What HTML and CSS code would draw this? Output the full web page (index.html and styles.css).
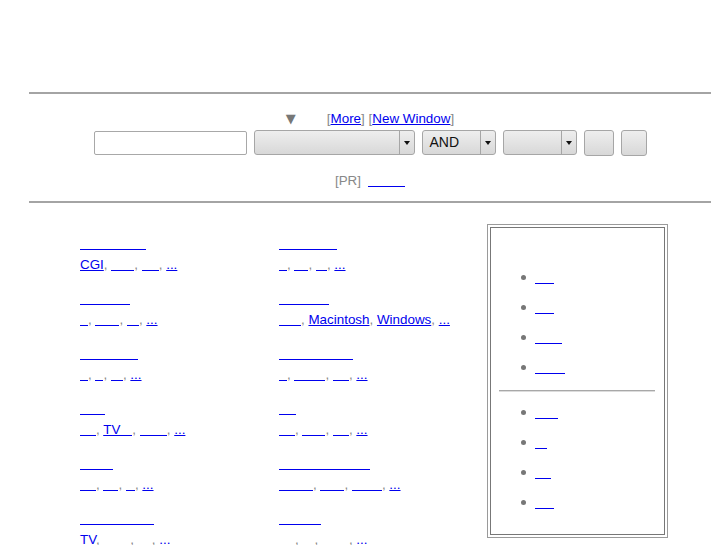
FILE: index.html
```html
<!DOCTYPE html>
<html lang="ja">
<head>
<meta charset="utf-8">
<title>Directory</title>
<link rel="stylesheet" href="styles.css">
</head>
<body>
<div class="page">
  <div class="masthead"></div>
  <div class="rule"></div>

  <div class="search">
    <div class="opts"><span class="tri">▼</span><span class="spacer"></span><span class="br">[</span><a href="#">More</a><span class="br">]</span> <span class="br">[</span><a href="#">New Window</a><span class="br">]</span></div>
    <div class="controls">
      <input class="field" type="text">
      <div class="sel s-wide"><span class="val"></span><span class="arrow"></span></div>
      <div class="sel s-mid"><span class="val">AND</span><span class="arrow"></span></div>
      <div class="sel s-mid"><span class="val"></span><span class="arrow"></span></div>
      <button class="btn b-a" type="button"></button>
      <button class="btn b-b" type="button"></button>
    </div>
    <div class="pr"><span class="br">[PR]</span><a href="#" class="b w37"></a></div>
  </div>

  <div class="rule"></div>

  <div class="dir">
    <div class="col">
      <div class="cat">
        <div class="hd"><a href="#" class="b w66"></a></div>
        <div class="sub"><a href="#">CGI</a>, <a href="#" class="b w23"></a>, <a href="#" class="b w17"></a>, <a href="#">...</a></div>
      </div>
      <div class="cat">
        <div class="hd"><a href="#" class="b w50"></a></div>
        <div class="sub"><a href="#" class="b w8"></a>, <a href="#" class="b w24"></a>, <a href="#" class="b w12"></a>, <a href="#">...</a></div>
      </div>
      <div class="cat">
        <div class="hd"><a href="#" class="b w58"></a></div>
        <div class="sub"><a href="#" class="b w8"></a>, <a href="#" class="b w8"></a>, <a href="#" class="b w12"></a>, <a href="#">...</a></div>
      </div>
      <div class="cat">
        <div class="hd"><a href="#" class="b w25"></a></div>
        <div class="sub"><a href="#" class="b w16"></a>, <a href="#">TV<span class="b w12"></span></a>, <a href="#" class="b w27"></a>, <a href="#">...</a></div>
      </div>
      <div class="cat">
        <div class="hd"><a href="#" class="b w33"></a></div>
        <div class="sub"><a href="#" class="b w16"></a>, <a href="#" class="b w15"></a>, <a href="#" class="b w9"></a>, <a href="#">...</a></div>
      </div>
      <div class="cat">
        <div class="hd"><a href="#" class="b w74"></a></div>
        <div class="sub"><a href="#">TV</a>, <a href="#" class="b w27"></a>, <a href="#" class="b w14"></a>, <a href="#">...</a></div>
      </div>
    </div>

    <div class="col">
      <div class="cat">
        <div class="hd"><a href="#" class="b w58"></a></div>
        <div class="sub"><a href="#" class="b w8"></a>, <a href="#" class="b w14"></a>, <a href="#" class="b w11"></a>, <a href="#">...</a></div>
      </div>
      <div class="cat">
        <div class="hd"><a href="#" class="b w50"></a></div>
        <div class="sub"><a href="#" class="b w22"></a>, <a href="#">Macintosh</a>, <a href="#">Windows</a>, <a href="#">...</a></div>
      </div>
      <div class="cat">
        <div class="hd"><a href="#" class="b w74"></a></div>
        <div class="sub"><a href="#" class="b w8"></a>, <a href="#" class="b w31"></a>, <a href="#" class="b w16"></a>, <a href="#">...</a></div>
      </div>
      <div class="cat">
        <div class="hd"><a href="#" class="b w17"></a></div>
        <div class="sub"><a href="#" class="b w16"></a>, <a href="#" class="b w23"></a>, <a href="#" class="b w16"></a>, <a href="#">...</a></div>
      </div>
      <div class="cat">
        <div class="hd"><a href="#" class="b w91"></a></div>
        <div class="sub"><a href="#" class="b w34"></a>, <a href="#" class="b w24"></a>, <a href="#" class="b w30"></a>, <a href="#">...</a></div>
      </div>
      <div class="cat">
        <div class="hd"><a href="#" class="b w42"></a></div>
        <div class="sub"><a href="#" class="b w16"></a>, <a href="#" class="b w12"></a>, <a href="#" class="b w27"></a>, <a href="#">...</a></div>
      </div>
    </div>

    <div class="box">
      <div class="inner">
        <ul class="list first">
          <li><a href="#" class="b w19"></a></li>
          <li><a href="#" class="b w19"></a></li>
          <li><a href="#" class="b w27"></a></li>
          <li><a href="#" class="b w30"></a></li>
        </ul>
        <div class="sep"></div>
        <ul class="list">
          <li><a href="#" class="b w23"></a></li>
          <li><a href="#" class="b w12"></a></li>
          <li><a href="#" class="b w16"></a></li>
          <li><a href="#" class="b w19"></a></li>
        </ul>
      </div>
    </div>
  </div>
</div>
</body>
</html>
```

FILE: styles.css
```css
html, body {
  margin: 0;
  padding: 0;
  background: #fff;
}
body {
  font-family: "Liberation Sans", Arial, sans-serif;
  font-size: 13.4px;
  color: #000;
}
a {
  color: #0000ee;
  text-decoration: underline;
}
.page {
  margin-left: 29px;
  width: 682px;
}
.masthead {
  height: 92px;
}
.rule {
  height: 2px;
  background: #a4a4a4;
}

/* search area */
.search {
  padding: 16px 0 13px;
  text-align: center;
}
.opts {
  line-height: 17px;
  height: 16px;
}
.tri {
  font-family: "DejaVu Sans", sans-serif;
  font-size: 13px;
  color: #777;
}
.spacer {
  display: inline-block;
  width: 31px;
}
.br {
  color: #888;
}
.controls {
  margin-top: 4px;
  display: flex;
  justify-content: center;
  align-items: flex-start;
  gap: 7px;
  height: 26px;
}
.field {
  box-sizing: border-box;
  width: 153px;
  height: 24px;
  margin: 1px 0 0;
  border: 1px solid #a8a8a8;
  border-radius: 2px;
  background: #fff;
  padding: 0;
}
.sel {
  box-sizing: border-box;
  height: 25px;
  display: flex;
  border: 1px solid #a6a6a6;
  border-radius: 3px;
  background: linear-gradient(#eeeeee, #d8d8d8);
}
.s-wide { width: 161px; }
.s-mid { width: 74px; }
.val {
  flex: 1;
  padding-left: 7px;
  text-align: left;
  font-size: 14px;
  line-height: 23px;
  color: #111;
}
.arrow {
  width: 14px;
  border-left: 1px solid #a6a6a6;
  display: flex;
  align-items: center;
  justify-content: center;
}
.arrow::after {
  content: "";
  width: 0;
  height: 0;
  border-left: 3px solid transparent;
  border-right: 3px solid transparent;
  border-top: 4px solid #111;
}
.btn {
  box-sizing: border-box;
  height: 26px;
  border: 1px solid #a6a6a6;
  border-radius: 3px;
  background: linear-gradient(#eeeeee, #d8d8d8);
  padding: 0;
  margin: 0;
}
.b-a { width: 30px; }
.b-b { width: 26px; }
.pr {
  margin-top: 16px;
  line-height: 17px;
  height: 16px;
}
.pr .b {
  margin-left: 7px;
}

/* blank (unrendered) link text */
.b {
  display: inline-block;
  height: 0;
  border-bottom: 1px solid #0000ee;
  vertical-align: -2px;
}
.w7 { width: 7px; }
.w8 { width: 8px; }
.w9 { width: 9px; }
.w11 { width: 11px; }
.w12 { width: 12px; }
.w14 { width: 14px; }
.w15 { width: 15px; }
.w16 { width: 16px; }
.w17 { width: 17px; }
.w19 { width: 19px; }
.w22 { width: 22px; }
.w23 { width: 23px; }
.w24 { width: 24px; }
.w25 { width: 25px; }
.w27 { width: 27px; }
.w30 { width: 30px; }
.w31 { width: 31px; }
.w33 { width: 33px; }
.w34 { width: 34px; }
.w37 { width: 37px; }
.w42 { width: 42px; }
.w50 { width: 50px; }
.w58 { width: 58px; }
.w66 { width: 66px; }
.w74 { width: 74px; }
.w91 { width: 91px; }

/* directory */
.dir {
  display: grid;
  grid-template-columns: 199px 208px 181px;
  padding: 21px 0 0 51px;
  align-items: start;
}
.col {
  padding-top: 10px;
}
.cat {
  margin-bottom: 14px;
}
.hd, .sub {
  line-height: 20px;
  height: 20px;
  white-space: nowrap;
}
.sub {
  margin-top: 1px;
  color: #888;
}

.box {
  border: 1px solid #9a9a9a;
  padding: 2px;
}
.inner {
  border: 1px solid #777;
  padding: 35px 0 16px;
}
.list {
  list-style: none;
  margin: 0;
  padding: 0;
}
.list li {
  position: relative;
  height: 30px;
  line-height: 30px;
  padding-left: 44px;
}
.list li::before {
  content: "";
  position: absolute;
  left: 30px;
  top: 12px;
  width: 5px;
  height: 5px;
  border-radius: 50%;
  background: #777;
}
.sep {
  margin: 7px 9px 6px 8px;
  height: 1px;
  border-top: 1px solid #a8a8a8;
  background: #dcdcdc;
}
```
